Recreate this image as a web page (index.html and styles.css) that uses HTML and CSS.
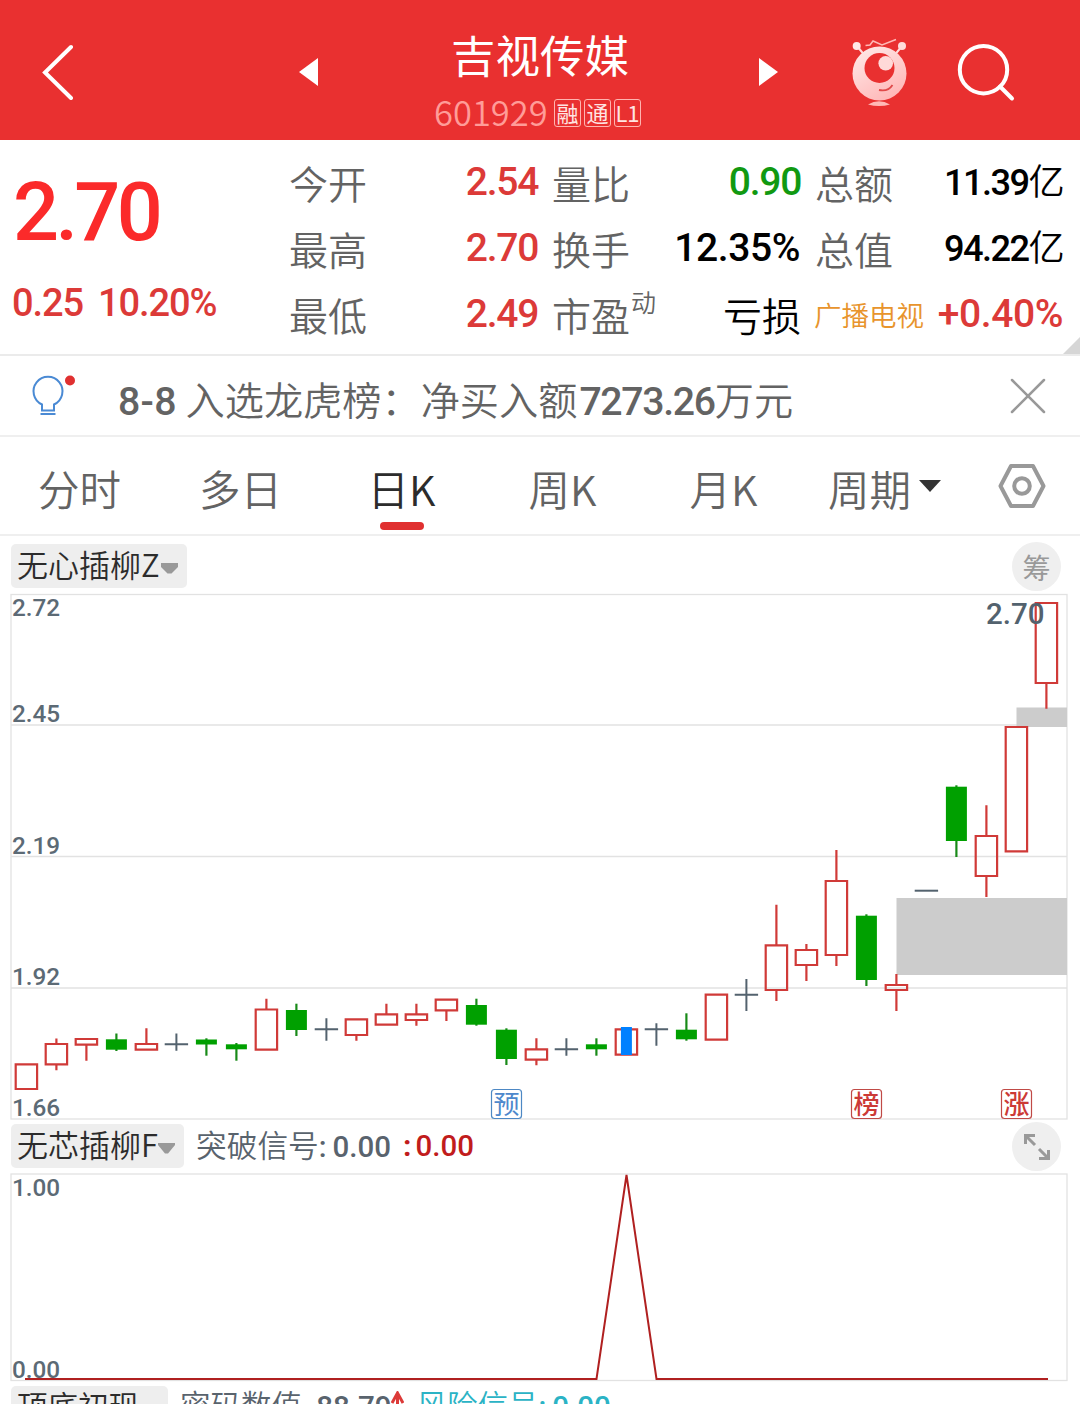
FILE: index.html
```html
<!DOCTYPE html>
<html lang="zh-CN">

<head>
  <meta charset="UTF-8">
  <meta name="viewport" content="width=device-width, initial-scale=1.0">
  <title>吉视传媒 601929</title>
  <link rel="stylesheet" href="styles.css">
</head>

<body>
  <header class="topbar">
    <svg class="back" width="36" height="60" viewBox="0 0 36 60"><path d="M31 7L5 32.500L31 58" /></svg>
    <svg class="prev" width="19" height="28" viewBox="0 0 19 28"><path d="M19 0V28L0 14Z" /></svg>
    <div class="stock">
      <h1>吉视传媒</h1>
      <div class="code">
        <span class="num">601929</span>
        <span class="mark">融</span><span class="mark">通</span><span class="mark">L1</span>
      </div>
    </div>
    <svg class="next" width="19" height="28" viewBox="0 0 19 28"><path d="M0 0V28L19 14Z" /></svg>
    <svg class="robot" width="60" height="72" viewBox="850 36 60 72">
      <defs>
        <linearGradient id="skin" x1="0" y1="0" x2="0.6" y2="1">
          <stop offset="0" stop-color="#ffeceb" />
          <stop offset="1" stop-color="#ffb9b9" />
        </linearGradient>
      </defs>
      <path d="M857 46L863.5 54M902 46L895.500 54" stroke="#ffdcdb" stroke-width="2" />
      <circle cx="856.700" cy="46" r="4" fill="#ffe9e8" />
      <circle cx="902" cy="46" r="4" fill="#ffdcdb" />
      <path d="M865.500 45.500L870 45L873 41L882 45L896 39.500" fill="none" stroke="#ffb9b6" stroke-width="1.500" />
      <circle cx="879.500" cy="73.500" r="27" fill="url(#skin)" />
      <circle cx="879.500" cy="68" r="15" fill="#e93030" />
      <circle cx="885.700" cy="63.300" r="7.300" fill="#ffd9d8" />
      <path d="M879 90Q888 92 892.500 85" fill="none" stroke="#e04a4a" stroke-width="1.800" />
      <path d="M868 104.500Q879 98 890 104.500Q879 107.500 868 104.500Z" fill="#ffb9b6" />
    </svg>
    <svg class="search" width="60" height="60" viewBox="0 0 60 60"><circle cx="27.500" cy="27.700" r="23.700" /><path d="M44 44.500L56 56.500" /></svg>
  </header>

  <section class="quote">
    <div class="price">
      <div class="last">2.70</div>
      <div class="change"><span>0.25</span><span>10.20%</span></div>
    </div>
    <div class="stats">
      <dl>
        <div><dt>今开</dt><dd class="up">2.54</dd></div>
        <div><dt>最高</dt><dd class="up">2.70</dd></div>
        <div><dt>最低</dt><dd class="up">2.49</dd></div>
      </dl>
      <dl>
        <div><dt>量比</dt><dd class="down">0.90</dd></div>
        <div><dt>换手</dt><dd class="percent">12.35%</dd></div>
        <div><dt>市盈<sup>动</sup></dt><dd class="word">亏损</dd></div>
      </dl>
      <dl>
        <div><dt>总额</dt><dd class="total">11.39<span>亿</span></dd></div>
        <div><dt>总值</dt><dd class="total">94.22<span>亿</span></dd></div>
        <div><dt class="sector">广播电视</dt><dd class="up percent">+0.40%</dd></div>
      </dl>
    </div>
    <i class="corner"></i>
  </section>

  <section class="notice">
    <svg class="bulb" width="48" height="44" viewBox="0 0 48 44">
      <path d="M11 32V29.500A14.500 14.500 0 1 1 23 29.500V32V35.500H11ZM9.500 39H24.500" fill="none" stroke="#4a8ad4" stroke-width="2" />
      <circle cx="39" cy="5.500" r="5" fill="#e03030" />
    </svg>
    <p><b class="date">8-8</b> 入选龙虎榜：净买入额<b>7273.26</b>万元</p>
    <svg class="close" width="36" height="36" viewBox="0 0 36 36"><path d="M2 2L34 34M34 2L2 34" /></svg>
  </section>

  <nav class="tabs">
    <a>分时</a>
    <a>多日</a>
    <a class="active">日K</a>
    <a>周K</a>
    <a>月K</a>
    <a class="more">周期<svg width="22" height="12" viewBox="0 0 22 12"><path d="M0 0H22L11 12Z" /></svg></a>
    <svg class="gear" width="48" height="46" viewBox="0 0 48 46"><path d="M13 3H35L45.500 23L35 43H13L2.500 23Z" /><circle cx="24" cy="23" r="7.800" /></svg>
  </nav>

  <main>
    <div class="panel-head main-head">
      <span class="chip">无心插柳Z<svg width="17" height="11" viewBox="0 0 17 11"><path d="M0 0H17V4L10.500 10.500H6.500L0 4Z" /></svg></span>
      <span class="round">筹</span>
    </div>
    <svg class="chart" id="kline" width="1080" height="530" viewBox="0 592 1080 530">
      <path class="grid" d="M11 725H1067M11 856.500H1067M11 988H1067" />
      <rect class="frame" x="11" y="594.500" width="1056" height="524.500" />
      <rect class="gap" x="896.500" y="898" width="170.500" height="77" />
      <rect class="gap" x="1016.500" y="707.500" width="50.500" height="19.500" />
      <g id="candles"></g>
      <g class="axis">
        <text x="12" y="616">2.72</text>
        <text x="12" y="722">2.45</text>
        <text x="12" y="854">2.19</text>
        <text x="12" y="985">1.92</text>
        <text x="12" y="1116">1.66</text>
      </g>
      <text class="peak" x="986" y="624">2.70</text>
      <g class="event notice-event"><rect x="491.500" y="1089.500" width="30" height="29" rx="3" /><text x="506.500" y="1113.500">预</text></g>
      <g class="event"><rect x="851.500" y="1089.500" width="30" height="29" rx="3" /><text x="866.500" y="1113.500">榜</text></g>
      <g class="event"><rect x="1001.500" y="1089.500" width="30" height="29" rx="3" /><text x="1016.500" y="1113.500">涨</text></g>
    </svg>

    <div class="panel-head sub-head">
      <span class="chip">无芯插柳F<svg width="17" height="11" viewBox="0 0 17 11"><path d="M0 0H17V2L10 10.500H7L0 2Z" /></svg></span>
      <span class="signal">突破信号<b>:</b><b class="val">0.00</b></span>
      <span class="signal red">:<b>0.00</b></span>
      <span class="round"><svg width="28" height="28" viewBox="0 0 28 28"><path d="M12 12L3 3M2.500 11V2.500H12M16 16L25 25M25.500 17V25.500H16" /></svg></span>
    </div>
    <svg class="chart" width="1080" height="212" viewBox="0 1172 1080 212">
      <rect class="frame" x="11" y="1174" width="1056" height="206.500" />
      <g class="axis">
        <text x="12" y="1196">1.00</text>
        <text x="12" y="1378">0.00</text>
      </g>
      <path class="line" d="M25 1379H596.500L626.500 1175L656.500 1379H1048" />
    </svg>

    <div class="panel-head last-head">
      <span class="chip">顶底初现</span>
      <span class="signal">密码数值<b>.</b><b class="val">88.79</b></span>
      <svg class="rise" width="13" height="24" viewBox="0 0 13 24"><path d="M6.500 24V2M1 12L6.500 2L12 12" /></svg>
      <span class="signal cyan">风险信号<b>:</b><b class="val">0.00</b></span>
    </div>
  </main>

  <script>
    // type, high, top, bottom, low
    const candles = [
      ['r', 1063.3, 1063.3, 1090, 1090],
      ['r', 1038.5, 1043, 1065.3, 1070.3],
      ['r', 1038, 1038, 1045.7, 1060.7],
      ['g', 1033.5, 1039.3, 1049.7, 1051],
      ['r', 1028.3, 1043, 1050.7, 1050.7],
      ['x', 1033.5, 1044.3, 1044.3, 1050.7],
      ['g', 1038.3, 1039.5, 1044.5, 1055.7],
      ['g', 1043, 1044.3, 1049.3, 1060.7],
      ['r', 998.7, 1008.5, 1050.7, 1050.7],
      ['g', 1003.7, 1010, 1030, 1036],
      ['x', 1018.3, 1029.3, 1029.3, 1040.7],
      ['r', 1018.3, 1018.3, 1036, 1040.7],
      ['r', 1003.7, 1013.3, 1025.7, 1025.7],
      ['r', 1003.7, 1013.3, 1021, 1025.7],
      ['r', 998.7, 998.7, 1011.3, 1021],
      ['g', 998.7, 1005, 1024.7, 1025.7],
      ['g', 1028.3, 1029.7, 1059, 1065],
      ['r', 1038.3, 1048.3, 1060.7, 1065.3],
      ['x', 1038.3, 1049.3, 1049.3, 1055.7],
      ['g', 1038.3, 1044.3, 1049.3, 1055.7],
      ['b', 1028.3, 1028.3, 1055.7, 1055.7],
      ['x', 1023.3, 1029.3, 1029.3, 1045.7],
      ['g', 1013.3, 1029.7, 1039.3, 1040.7],
      ['r', 993.7, 993.7, 1040.7, 1040.7],
      ['x', 979, 994.7, 994.7, 1011],
      ['r', 904.7, 944.3, 991, 1001],
      ['r', 944, 949, 966, 981],
      ['r', 850, 880, 956, 966],
      ['g', 914.3, 915.7, 980, 986],
      ['r', 974, 984, 991, 1011],
      ['x', 890.7, 890.7, 890.7, 890.7],
      ['g', 785.3, 786.7, 841, 857],
      ['r', 805.3, 835, 877, 897],
      ['r', 726, 726, 852.3, 852.3],
      ['r', 602, 602, 684, 708.7]
    ];

    let out = '';
    candles.forEach(([type, high, top, bottom, low], i) => {
      const x = 26.4 + i * 30;
      if (type === 'x') {
        out += `<path class="doji" d="M${x - 11.7} ${top}H${x + 11.7}M${x} ${high}V${low}"/>`;
      } else if (type === 'g') {
        out += `<path class="fall-wick" d="M${x} ${high}V${low}"/>`;
        out += `<rect class="fall" x="${x - 10.5}" y="${top}" width="21" height="${bottom - top}"/>`;
      } else {
        out += `<path class="rise-body" d="M${x} ${high}V${top}M${x} ${bottom}V${low}M${x - 10.7} ${top + 1}H${x + 10.7}V${bottom - 1}H${x - 10.7}Z"/>`;
        if (type === 'b') out += `<rect class="hit" x="${x - 5.5}" y="${top - 1.3}" width="11" height="28"/>`;
      }
    });
    document.getElementById('candles').innerHTML = out;
  </script>
</body>

</html>
```

FILE: styles.css
```css
* {
  box-sizing: border-box;
  margin: 0;
  padding: 0;
}

body {
  width: 1080px;
  height: 1404px;
  overflow: hidden;
  background: #fff;
  color: #636363;
  font-family: 'Noto Sans CJK SC', sans-serif;
  font-weight: 350;
}

svg {
  display: block;
  flex: none;
}

b {
  font-family: Roboto, 'Noto Sans CJK SC', sans-serif;
  font-weight: 500;
}

.topbar {
  display: flex;
  height: 140px;
  background: #e93030;
  color: #fff;
}

.back {
  margin: 40px 0 0 40px;
  fill: none;
  stroke: #fff;
  stroke-width: 4;
  stroke-linecap: round;
}

.prev, .next {
  margin-top: 58px;
  fill: #fff;
}

.prev {
  margin-left: 223px;
}

.stock {
  width: 441px;
  padding-top: 24px;
}

.stock h1 {
  padding-left: 3px;
  font-size: 44.5px;
  line-height: 60px;
  font-weight: 400;
  text-align: center;
}

.code {
  display: flex;
  gap: 3px;
  margin: 15px 0 0 116px;
}

.code .num {
  width: 117px;
  font-size: 34.5px;
  line-height: 25px;
  color: #ff9c98;
}

.mark {
  width: 27px;
  height: 28px;
  border: 1px solid #ffb4b0;
  border-radius: 3px;
  font-size: 22px;
  line-height: 25px;
  font-weight: 400;
  text-align: center;
  color: #ffe4e2;
}

.robot {
  margin: 36px 0 0 72px;
}

.search {
  margin: 42px 0 0 46px;
  fill: none;
  stroke: #fff;
  stroke-width: 4;
  stroke-linecap: round;
}

.quote {
  position: relative;
  display: flex;
  height: 216px;
  border-bottom: 2px solid #ebebeb;
}

.price {
  width: 289px;
  padding: 33px 0 0 12px;
  font-family: Roboto, sans-serif;
  font-weight: 500;
}

.last {
  padding-left: 1px;
  font-size: 81px;
  line-height: 80px;
  letter-spacing: -3.6px;
  color: #fb2a2a;
}

.change {
  display: flex;
  gap: 15px;
  margin-top: 28px;
  font-size: 38px;
  line-height: 44px;
  letter-spacing: -1.1px;
  color: #dc3a38;
}

.stats {
  display: flex;
  gap: 14px;
  padding-top: 9px;
}

.stats dl {
  width: 249px;
}

.stats dl div {
  display: flex;
  justify-content: space-between;
  height: 66px;
  line-height: 66px;
}

.stats dt {
  font-size: 39px;
}

.stats sup {
  margin-left: 1px;
  font-size: 25px;
  line-height: 0;
  vertical-align: 19px;
}

.stats dd {
  font-family: Roboto, 'Noto Sans CJK SC', sans-serif;
  font-size: 39px;
  font-weight: 500;
  letter-spacing: -1.3px;
  color: #000;
}

.stats .total {
  padding-right: 1px;
  font-size: 36.2px;
  line-height: 68px;
  letter-spacing: -1.6px;
}

.stats .total span {
  font-weight: 350;
}

.stats .percent {
  padding-right: 1px;
  letter-spacing: -.4px;
}

.stats .word {
  font-family: 'Noto Sans CJK SC', sans-serif;
  font-weight: 350;
  letter-spacing: 0;
}

.stats .up {
  color: #dc3a38;
}

.stats .down {
  color: #119911;
}

.stats .sector {
  margin-left: -1px;
  font-size: 27.5px;
  line-height: 66px;
  color: #e8942c;
}

.corner {
  position: absolute;
  right: 0;
  bottom: 0;
  border-left: 17px solid transparent;
  border-bottom: 17px solid #d6d6d6;
}

.notice {
  display: flex;
  align-items: flex-start;
  height: 81px;
  border-bottom: 2px solid #efefef;
}

.bulb {
  margin: 19px 0 0 31px;
}

.notice p {
  flex: 1;
  margin-left: 39px;
  font-size: 39.2px;
  line-height: 84px;
  white-space: nowrap;
}

.notice b {
  margin-left: 2px;
  letter-spacing: -1.3px;
}

.notice .date {
  margin-left: 0;
  letter-spacing: .3px;
}

.close {
  margin: 22px 34px 0 0;
  fill: none;
  stroke: #999;
  stroke-width: 2.5;
  stroke-linecap: round;
}

.tabs {
  display: flex;
  height: 99px;
  border-bottom: 2px solid #efefef;
}

.tabs a {
  display: flex;
  justify-content: center;
  width: 161px;
  padding-right: 2px;
  font-size: 41.5px;
  line-height: 102px;
}

.tabs .active {
  position: relative;
  color: #2c2c2c;
}

.tabs .active::after {
  content: '';
  position: absolute;
  left: 58px;
  top: 85px;
  width: 44px;
  height: 8px;
  border-radius: 4px;
  background: #e03030;
}

.tabs .more svg {
  margin: 43px 0 0 8px;
  fill: #333;
}

.gear {
  margin: 26px 0 0 32px;
  fill: none;
  stroke: #999;
  stroke-width: 4;
  stroke-linejoin: round;
}

.panel-head {
  display: flex;
  padding: 0 19px 0 11px;
}

.main-head {
  height: 56px;
  padding-top: 8px;
}

.sub-head {
  height: 50px;
  padding-top: 2px;
}

.last-head {
  height: 60px;
  padding-top: 2px;
}

.chip {
  display: flex;
  height: 44px;
  padding: 0 9px 0 6px;
  border-radius: 5px;
  background: #eee;
  color: #2c2c2c;
  font-size: 31px;
  line-height: 40px;
}

.chip svg {
  margin: 19px 0 0 1px;
  fill: #999;
}

.sub-head .chip {
  width: 173px;
}

.sub-head .chip svg {
  margin-left: 0;
}

.round {
  display: flex;
  align-items: center;
  justify-content: center;
  width: 49px;
  height: 49px;
  margin: -2px 0 0 auto;
  border-radius: 50%;
  background: #efefef;
  color: #999;
  font-size: 28px;
  font-weight: 400;
}

.round svg {
  fill: none;
  stroke: #999;
  stroke-width: 3;
}

.signal {
  margin-left: 12px;
  font-size: 30.7px;
  line-height: 40px;
  color: #59636d;
}

.signal b {
  font-size: 29.5px;
}

.signal .val {
  margin-left: 6px;
}

.signal.red {
  font-family: Roboto, sans-serif;
  font-size: 30px;
  line-height: 43px;
  font-weight: 700;
  color: #c11c1c;
}

.signal.red b {
  margin-left: 4px;
}

.last-head .chip {
  width: 157px;
  font-size: 30.5px;
  line-height: 38px;
}

.last-head .signal {
  font-size: 30.5px;
  line-height: 37px;
}

.signal.cyan {
  color: #2bb3c5;
}

.rise {
  margin-top: 5px;
  fill: none;
  stroke: #dc3a38;
  stroke-width: 3;
}

.chart {
  font-family: Roboto, sans-serif;
}

.grid, .frame {
  fill: none;
  stroke: #e2e2e2;
  stroke-width: 1.3;
}

.gap {
  fill: #ccc;
}

.axis {
  font-size: 24.3px;
  font-weight: 500;
  fill: #5c6a75;
}

.peak {
  font-size: 29.5px;
  font-weight: 500;
  fill: #53626e;
}

.doji {
  stroke: #53626e;
  stroke-width: 2;
}

.fall {
  fill: #00a000;
}

.fall-wick {
  stroke: #188a18;
  stroke-width: 2.2;
}

.rise-body {
  fill: none;
  stroke: #d03a38;
  stroke-width: 2.2;
}

.hit {
  fill: #0080ff;
}

.event rect {
  fill: #fff;
  stroke: #c04a46;
  stroke-width: 1.2;
}

.event text {
  font-family: 'Noto Sans CJK SC', sans-serif;
  font-size: 26px;
  font-weight: 500;
  text-anchor: middle;
  fill: #cc3a36;
}

.notice-event rect {
  stroke: #4d88c4;
}

.notice-event text {
  font-weight: 400;
  fill: #4d88cc;
}

.line {
  fill: none;
  stroke: #b02020;
  stroke-width: 2;
}
```
